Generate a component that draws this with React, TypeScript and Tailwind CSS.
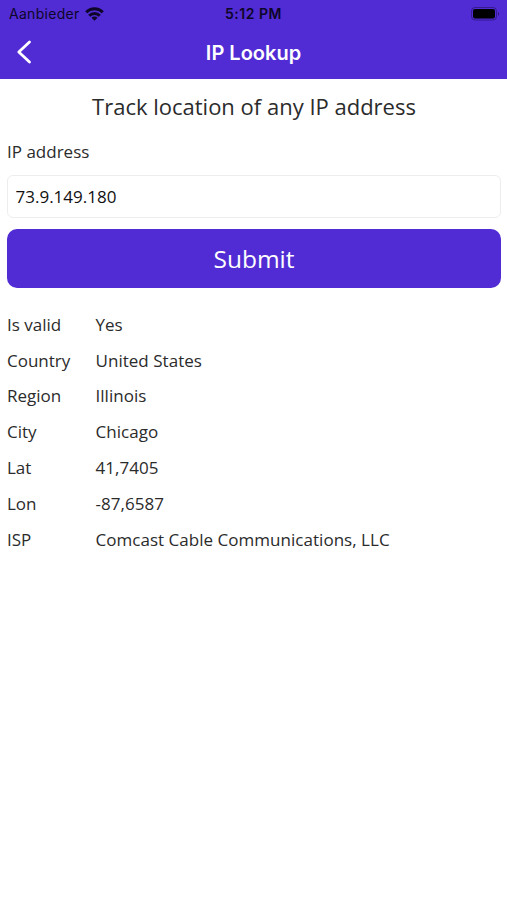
import { useState } from "react";

type Row = { label: string; value: string };

const rows: Row[] = [
  { label: "Is valid", value: "Yes" },
  { label: "Country", value: "United States" },
  { label: "Region", value: "Illinois" },
  { label: "City", value: "Chicago" },
  { label: "Lat", value: "41,7405" },
  { label: "Lon", value: "-87,6587" },
  { label: "ISP", value: "Comcast Cable Communications, LLC" },
];

function StatusBar() {
  return (
    <div className="grid h-[27px] grid-cols-3 items-center pl-[9px] pr-[7px] font-['Inter',sans-serif] text-[14px] leading-none text-[#0d0628]">
      <div className="flex items-center gap-[5px]">
        <span className="tracking-[0.3px]">Aanbieder</span>
        <svg width="19" height="14" viewBox="0 0 19 14" fill="none" stroke="currentColor" strokeWidth="2.9">
          <path d="M1.2 5.2a11.8 11.8 0 0 1 16.6 0" />
          <path d="M4.2 8.7a7.5 7.5 0 0 1 10.6 0" />
          <path d="m9.5 13.8-3-3a4.2 4.2 0 0 1 6 0z" fill="currentColor" stroke="none" />
        </svg>
      </div>
      <span className="-ml-[2px] text-center font-semibold tracking-[0.5px]">5:12 PM</span>
      <svg className="justify-self-end" width="29" height="14" viewBox="0 0 29 14">
        <rect x="0.5" y="0.5" width="25" height="12.5" rx="3.5" fill="none" stroke="currentColor" strokeOpacity="0.4" />
        <rect x="2" y="2" width="22" height="9.5" rx="2" fill="#000" />
        <path d="M27 5c1.6.6 1.6 3.2 0 3.8z" fill="currentColor" fillOpacity="0.5" />
      </svg>
    </div>
  );
}

export default function App() {
  const [ip, setIp] = useState("73.9.149.180");

  return (
    <div className="min-h-screen bg-white font-['Open_Sans',sans-serif] text-[#2b2b2b]">
      <header className="h-[79px] bg-[#512bd4]">
        <StatusBar />
        <div className="grid h-[50px] grid-cols-[48px_1fr_48px] items-center text-white">
          <button aria-label="Back" className="pl-[16px]">
            <svg width="16" height="24" viewBox="0 0 16 24" fill="none" stroke="currentColor" strokeWidth="2.8" strokeLinecap="round" strokeLinejoin="round">
              <path d="M13.5 2 2.8 12l10.7 10" />
            </svg>
          </button>
          <h1 className="pt-[2px] text-center font-['Inter',sans-serif] text-[20px] font-semibold leading-none">IP Lookup</h1>
        </div>
      </header>

      <main className="pl-[7px] pr-[6px] pt-[12px]">
        <h2 className="text-center text-[22px] leading-[30px]">Track location of any IP address</h2>
        <label htmlFor="ip" className="mt-[19px] block text-[17px] leading-[24px]">IP address</label>
        <input
          id="ip"
          type="text"
          value={ip}
          onChange={(e) => setIp(e.target.value)}
          className="mt-[11px] block h-[42.5px] w-full rounded-[6px] border border-[#ededed] px-[7.5px] text-[17px] text-[#111111] outline-none"
        />
        <button className="mt-[11.5px] block h-[59px] w-full rounded-[10px] bg-[#512bd4] pt-[2px] text-[24.5px] text-white">Submit</button>

        <dl className="mt-[24.8px] text-[17px] leading-[24px]">
          {rows.map((row) => (
            <div key={row.label} className="mb-[11.8px] grid grid-cols-[88.5px_1fr]">
              <dt>{row.label}</dt>
              <dd className="tracking-[0.03px]">{row.value}</dd>
            </div>
          ))}
        </dl>
      </main>
    </div>
  );
}
